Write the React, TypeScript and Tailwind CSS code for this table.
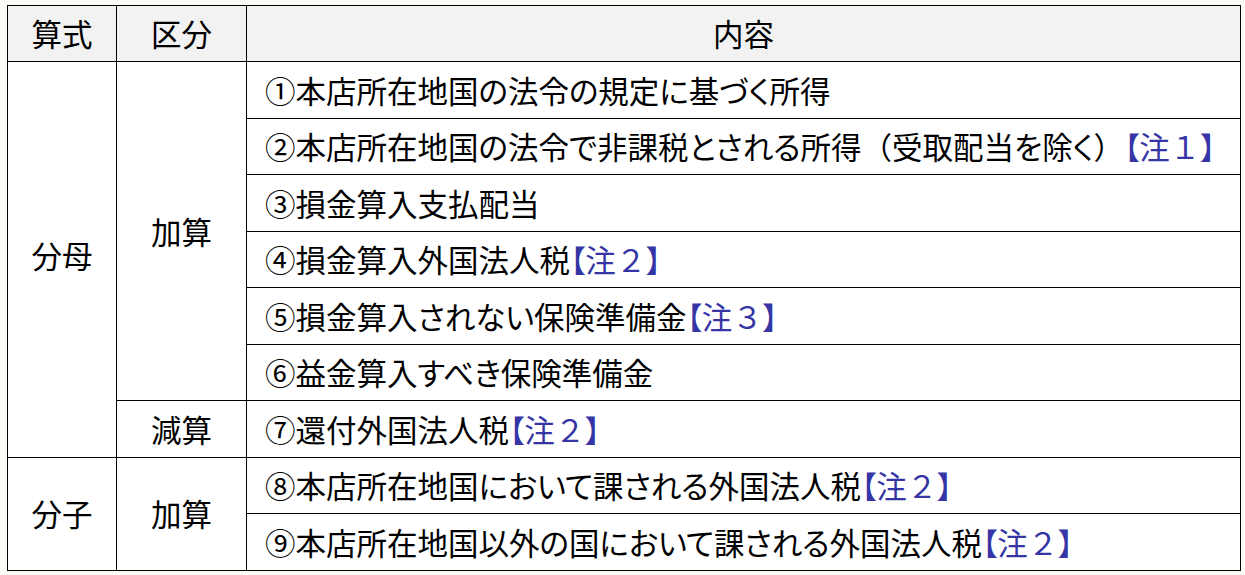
import React from "react";

type Row = { text: string; note?: string };

const rows: Row[] = [
  { text: "①本店所在地国の法令の規定に基づく所得" },
  { text: "②本店所在地国の法令で非課税とされる所得（受取配当を除く）", note: "【注１】" },
  { text: "③損金算入支払配当" },
  { text: "④損金算入外国法人税", note: "【注２】" },
  { text: "⑤損金算入されない保険準備金", note: "【注３】" },
  { text: "⑥益金算入すべき保険準備金" },
  { text: "⑦還付外国法人税", note: "【注２】" },
  { text: "⑧本店所在地国において課される外国法人税", note: "【注２】" },
  { text: "⑨本店所在地国以外の国において課される外国法人税", note: "【注２】" },
];

const cell = "border border-black align-middle";

// full-width parens and digits keep their full width; the rest is set proportional
function Spaced({ s }: { s: string }) {
  const parts = s.split(/([（）０-９])/).filter(Boolean);
  return (
    <>
      {parts.map((p, i) =>
        /^[（）０-９]$/.test(p) ? (
          <span key={i} className="[font-feature-settings:normal]">
            {p}
          </span>
        ) : (
          <span key={i}>{p}</span>
        )
      )}
    </>
  );
}

function Content({ row }: { row: Row }) {
  return (
    <td className={`${cell} pl-[18px] text-left whitespace-nowrap`}>
      <Spaced s={row.text} />
      {row.note && (
        <span className="text-[#3535a5]">
          <Spaced s={row.note} />
        </span>
      )}
    </td>
  );
}

export default function App() {
  return (
    <div
      className="min-h-[575px] w-[1245px] bg-[#fbfaf6] pt-[5px] pl-[7px] text-black text-[30.5px] leading-none [font-feature-settings:'palt']"
      style={{ fontFamily: '"Noto Sans CJK JP", "Noto Sans", sans-serif' }}
    >
      <table className="table-fixed border-collapse bg-white w-[1234px]">
        <colgroup>
          <col className="w-[109px]" />
          <col className="w-[130px]" />
          <col />
        </colgroup>
        <thead>
          <tr className="h-[56px] bg-[#f2f2f2]">
            <th className={`${cell} font-normal`}>算式</th>
            <th className={`${cell} font-normal`}>区分</th>
            <th className={`${cell} font-normal`}>内容</th>
          </tr>
        </thead>
        <tbody>
          <tr className="h-[56.5px]">
            <td className={`${cell} text-center pb-[8px]`} rowSpan={7}>分母</td>
            <td className={`${cell} text-center`} rowSpan={6}>加算</td>
            <Content row={rows[0]} />
          </tr>
          {rows.slice(1, 6).map((r) => (
            <tr key={r.text} className="h-[56.5px]">
              <Content row={r} />
            </tr>
          ))}
          <tr className="h-[56.5px]">
            <td className={`${cell} text-center`}>減算</td>
            <Content row={rows[6]} />
          </tr>
          <tr className="h-[56.5px]">
            <td className={`${cell} text-center`} rowSpan={2}>分子</td>
            <td className={`${cell} text-center`} rowSpan={2}>加算</td>
            <Content row={rows[7]} />
          </tr>
          <tr className="h-[56.5px]">
            <Content row={rows[8]} />
          </tr>
        </tbody>
      </table>
    </div>
  );
}
